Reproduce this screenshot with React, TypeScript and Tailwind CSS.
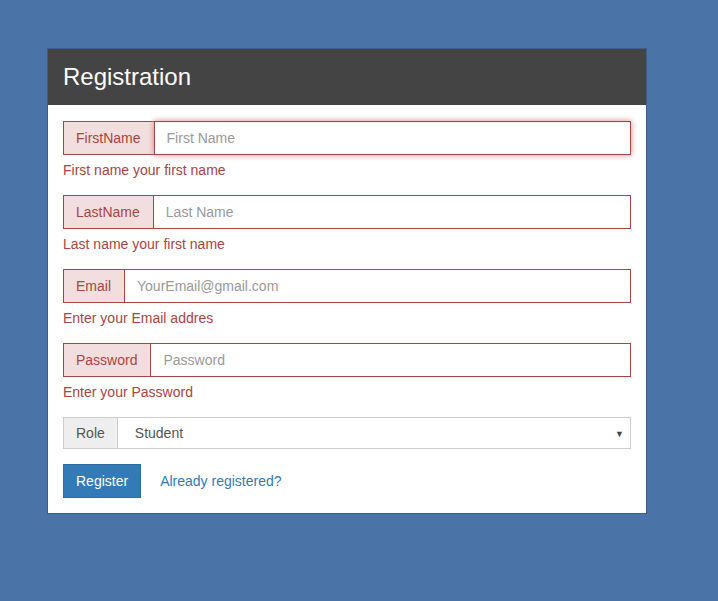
const fields = [
  { label: "FirstName", placeholder: "First Name", help: "First name your first name", focus: true },
  { label: "LastName", placeholder: "Last Name", help: "Last name your first name" },
  { label: "Email", placeholder: "YourEmail@gmail.com", help: "Enter your Email addres" },
  { label: "Password", placeholder: "Password", help: "Enter your Password" },
]

function App() {
  return (
    <div className="min-h-[601px] w-full bg-[#4a74a7] pt-12 pl-[47px] font-['Liberation_Sans',Arial,sans-serif] text-[14px] text-[#333]">
      <div className="w-[600px] border border-[#3a5f8c] bg-white">
        {/* Heading */}
        <div className="h-[56px] bg-[#444444] px-[15px] flex items-center">
          <h3 className="text-[24px] text-white leading-none pb-[1px]">Registration</h3>
        </div>

        <div className="px-[15px] pt-[16px] pb-[15px]">
          {fields.map((f, i) => (
            <div key={i} className="mb-[15px]">
              <div className="flex h-[34px]">
                <span className="flex items-center pl-3 pr-[13px] border border-r-0 border-[#a94442] bg-[#f2dede] text-[#a94442]">
                  {f.label}
                </span>
                <input
                  className={
                    "flex-1 border border-[#a94442] px-3 text-[14px] text-[#555] placeholder:text-[#999] outline-none " +
                    (f.focus ? "shadow-[inset_0_1px_1px_rgba(0,0,0,0.075),0_0_6px_#ce8483] caret-[#333]" : "")
                  }
                  placeholder={f.placeholder}
                  autoFocus={f.focus}
                />
              </div>
              <p className="mt-[5px] leading-5 text-[#a94442]">{f.help}</p>
            </div>
          ))}

          {/* Role */}
          <div className="flex h-[32px] mb-[15px]">
            <span className="flex items-center px-3 border border-[#ccc] bg-[#eee] text-[#555]">Role</span>
            <div className="relative flex-1 border border-l-0 border-[#ccc] flex items-center pl-[17px] text-[#555]">
              Student
              <span className="absolute right-[6px] top-[10px] text-[9px] text-[#444]">▼</span>
            </div>
          </div>

          <div className="flex items-center gap-[19px]">
            <button className="h-[34px] px-3 bg-[#337ab7] border border-[#2e6da4] text-white">Register</button>
            <a className="text-[#337ab7]">Already registered?</a>
          </div>
        </div>
      </div>
    </div>
  )
}

export default App
